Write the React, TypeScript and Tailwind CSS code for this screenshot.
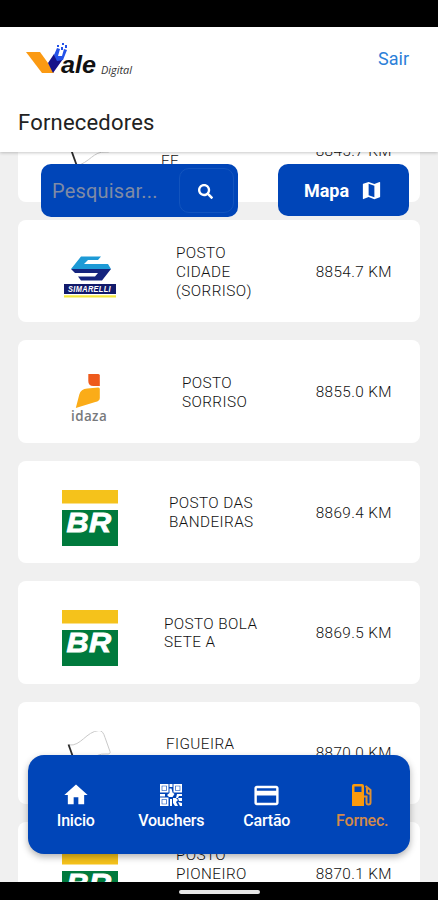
import React from "react";
import { MdHome, MdMap } from "react-icons/md";
import { FaSearch } from "react-icons/fa";

type Brand = "flag" | "simarelli" | "idaza" | "br";

function BrLogo() {
  return (
    <svg viewBox="0 0 56 56" className="h-[56px] w-[56px]">
      <rect width="56" height="13.5" fill="#f5c21b" />
      <rect y="20" width="56" height="36" fill="#007a3d" />
      <text x="4.5" y="41.5" fontFamily="Liberation Sans, sans-serif" fontWeight="700" fontStyle="italic" fontSize="28" textLength="45" lengthAdjust="spacingAndGlyphs" fill="#fff" stroke="#fff" strokeWidth="0.9">BR</text>
    </svg>
  );
}

function SimarelliLogo() {
  return (
    <svg viewBox="0 0 52 42" className="h-[42px] w-[52px]">
      <path d="M17 0.500h20l-3 3.500H24l-4 4h24l3 5H7z" fill="#1d9ad6" />
      <path d="M7 13h40L38 24.500H17l-3-4h17l3-3.500H11z" fill="#15247e" />
      <rect y="28" width="52" height="10" fill="#121a6b" />
      <text x="4" y="36.2" fontFamily="Liberation Sans, sans-serif" fontWeight="700" fontStyle="italic" fontSize="9" textLength="43" lengthAdjust="spacingAndGlyphs" fill="#fff">SIMARELLI</text>
      <rect y="39.3" width="52" height="2.2" fill="#f4e73a" />
    </svg>
  );
}

function IdazaLogo() {
  return (
    <svg viewBox="0.7 0 38 48" className="h-[48px] w-[38px]">
      <path d="M18 0h10q1.500 0 1.500 1.500V12H23q-5 0-5-5z" fill="#ee5a1c" />
      <path d="M5.500 34 9 20.500Q10.500 15 17 14.500L28 13.500q1.500 0 1.500 1.500V24q0 3-4.500 4z" fill="#fbac18" />
      <text x="0.8" y="46.5" fontFamily="Open Sans, sans-serif" fontWeight="600" fontSize="13.5" textLength="36" lengthAdjust="spacingAndGlyphs" fill="#77797c">idaza</text>
    </svg>
  );
}

function FlagLogo() {
  return (
    <svg viewBox="0.5 1.5 50 56" className="h-[56px] w-[50px]" fill="none">
      <path d="M4.500 15.500C16.500 17 21.500 2 34.500 1Q38.500 1 40.500 8L45.500 22Q46.500 25 41.500 24.500C28.500 23.500 26 35 10.500 39" stroke="#c9c9c9" strokeWidth="1" />
      <path d="M4 15 18 54" stroke="#2b2b2b" strokeWidth="1.800" />
    </svg>
  );
}

const suppliers: { brand: Brand; name: string[]; left: string; km: string }[] = [
  { brand: "flag", name: ["SANTA", "FE"], left: "pl-[143px]", km: "8845.7 KM" },
  { brand: "simarelli", name: ["POSTO", "CIDADE", "(SORRISO)"], left: "pl-[158px]", km: "8854.7 KM" },
  { brand: "idaza", name: ["POSTO", "SORRISO"], left: "pl-[164px]", km: "8855.0 KM" },
  { brand: "br", name: ["POSTO DAS", "BANDEIRAS"], left: "pl-[151px]", km: "8869.4 KM" },
  { brand: "br", name: ["POSTO BOLA", "SETE A"], left: "pl-[146px]", km: "8869.5 KM" },
  { brand: "flag", name: ["FIGUEIRA", "POSTO"], left: "pl-[148px]", km: "8870.0 KM" },
  { brand: "br", name: ["POSTO", "PIONEIRO", "II"], left: "pl-[158px]", km: "8870.1 KM" },
];

function BrandLogo({ brand }: { brand: Brand }) {
  if (brand === "br") return <BrLogo />;
  if (brand === "simarelli") return <SimarelliLogo />;
  if (brand === "idaza") return <IdazaLogo />;
  return <FlagLogo />;
}

function SupplierCard({ brand, name, left, km }: (typeof suppliers)[number]) {
  return (
    <li className="grid h-[102.4px] shrink-0 grid-cols-[1fr_auto] items-center rounded-lg bg-white pr-[28px]">
      <div className="col-start-1 row-start-1 flex w-[143px] items-center justify-center pt-[12px]">
        <BrandLogo brand={brand} />
      </div>
      <div className={"col-start-1 row-start-1 pt-[2px] " + left}>
        {name.map((line) => (
          <div key={line} className="whitespace-nowrap">{line}</div>
        ))}
      </div>
      <div className="col-start-2 row-start-1 pt-[2px] whitespace-nowrap">{km}</div>
    </li>
  );
}

function ValeLogo() {
  return (
    <svg viewBox="0 0 110 36" className="h-[36px] w-[110px]">
      <path d="M0 9h14l8 11 6 10H16z" fill="#fb9a13" />
      <path d="m22 20 6-9 3 4 6 1-10 14z" fill="#16128a" />
      <path d="m28 12 3-7 3 1-2 7h4l2-7 3 1-4 10-6 1z" fill="#2452e8" />
      <path d="M31 2h2v2h-2zM35 4h2v3h-2zM36 0h2v2h-2zM39 2h2v3h-2z" fill="#2452e8" />
      <text x="35" y="30" fontFamily="Liberation Sans, sans-serif" fontWeight="700" fontStyle="italic" fontSize="24" textLength="35" lengthAdjust="spacingAndGlyphs" fill="#111">ale</text>
      <text x="75" y="30.5" fontFamily="Open Sans, sans-serif" fontStyle="italic" fontSize="10.5" textLength="31" lengthAdjust="spacingAndGlyphs" fill="#333">Digital</text>
    </svg>
  );
}

function QrIcon() {
  return (
    <svg viewBox="0 0 22 22" className="h-[22px] w-[22px]" fill="currentColor">
      <path fillRule="evenodd" d="M0 0h8.500v8.500H0zM1.700 1.700v5.100h5.100V1.700zM13.500 0H22v8.500h-8.500zM15.200 1.700v5.100h5.100V1.700zM0 13.500h8.500V22H0zM1.700 15.200v5.100h5.100v-5.100z" />
      <path d="M2.300 2.300h3.900v3.900H2.300zM15.800 2.300h3.900v3.900h-3.900zM2.300 15.800h3.900v3.900H2.300z" />
      <path d="M9.500 0h3v3h-3zM9.500 4.500h2l1 4 2 1.500-2 3H9L7 11l2.500-2zM0 10h5v2.500H0zM17 10h5v2h-3l-1 2h-2zM13 14h3l2 2-2 2 2 4h-3l-2-3zM10 15h2v7h-2zM18 14h4v3h-3zM18 18l4 1v3h-2z" />
    </svg>
  );
}

function CardIcon() {
  return (
    <svg viewBox="0 0 24 24" className="h-[29px] w-[29px]" fill="currentColor">
      <path d="M20 4H4c-1.110 0-2 .89-2 2v12c0 1.110.89 2 2 2h16c1.110 0 2-.89 2-2V6c0-1.110-.89-2-2-2m0 14H4v-6h16zm0-10H4V6h16z" />
    </svg>
  );
}

function FuelIcon() {
  return (
    <svg viewBox="0 0 20 22" className="h-[22px] w-[20px]">
      <path fillRule="evenodd" d="M2 0h8q2 0 2 2v20H0V2q0-2 2-2m.500 2.500v5.500h7V2.500z" fill="#fb9a0b" />
      <path d="m13.500 2 5 4v12.500q0 2-2 2t-2-2v-6H12M15 4v4q0 1.800 3 1.800" fill="none" stroke="#dd9032" strokeWidth="2" />
    </svg>
  );
}

const tabs = [
  { label: "Inicio", icon: <MdHome className="size-[28px]" /> },
  { label: "Vouchers", icon: <QrIcon /> },
  { label: "Cartão", icon: <CardIcon /> },
  { label: "Fornec.", icon: <FuelIcon />, active: true },
];

export default function App() {
  return (
    <div className="relative flex h-[900px] w-[438px] flex-col overflow-hidden bg-[#f0f0f0] font-['Roboto','Liberation_Sans',sans-serif]">
      <div className="h-[27px] shrink-0 bg-black" />
      <header className="z-10 h-[125px] shrink-0 bg-white shadow-[0_1px_3px_rgba(0,0,0,0.22)]">
        <div className="flex h-[64px] items-center justify-between pr-[29px] pl-[26px]">
          <div className="pt-[3px]">
            <ValeLogo />
          </div>
          <button className="text-[18px] leading-6 text-[#2b80d8]">Sair</button>
        </div>
        <h1 className="px-[18px] pt-[17px] text-[22px] leading-[30px] tracking-[0.2px] text-[#222]">Fornecedores</h1>
      </header>
      <main className="min-h-0 flex-1 overflow-hidden px-[18px]">
        <ul className="-mt-[52.400px] flex flex-col gap-[18px] text-[15.300px] leading-[18.700px] font-light tracking-[0.400px] text-[#111]">
          {suppliers.map((s) => (
            <SupplierCard key={s.km} {...s} />
          ))}
        </ul>
      </main>
      <div className="absolute top-[164px] left-[41px] flex h-[53px] w-[197px] items-center justify-between rounded-[10px] bg-[#0045b8] pr-[4px] pl-[11px]">
        <span className="text-[20px] tracking-[0.2px] text-[#7f8ba5]">Pesquisar...</span>
        <button className="flex h-[45px] w-[55px] items-center justify-center rounded-[10px] border border-[#1254be] pt-[2px] pr-[3px] text-white">
          <FaSearch className="size-[15px]" />
        </button>
      </div>
      <button className="absolute top-[164px] left-[278px] flex h-[52px] w-[131px] items-center justify-center gap-[11px] rounded-[10px] bg-[#0045b8] text-[18px] font-bold text-white">
        Mapa
        <MdMap className="size-[23px]" />
      </button>
      <nav className="absolute top-[755px] left-[28px] grid h-[99px] w-[382px] grid-cols-4 rounded-[16px] bg-[#0045b8] shadow-[0_3px_7px_rgba(0,0,0,0.3)]">
        {tabs.map((tab) => (
          <button key={tab.label} className={"flex flex-col items-center pt-[24px] text-[16px] leading-5 font-medium tracking-[-0.2px] " + (tab.active ? "text-[#d28a4b]" : "text-white")}>
            <span className="flex h-[32px] items-center">{tab.icon}</span>
            {tab.label}
          </button>
        ))}
      </nav>
      <footer className="z-10 flex h-[18px] shrink-0 justify-center bg-black pt-[8px]">
        <div className="h-[4px] w-[81px] rounded-full bg-[#e6e6e6]" />
      </footer>
    </div>
  );
}
